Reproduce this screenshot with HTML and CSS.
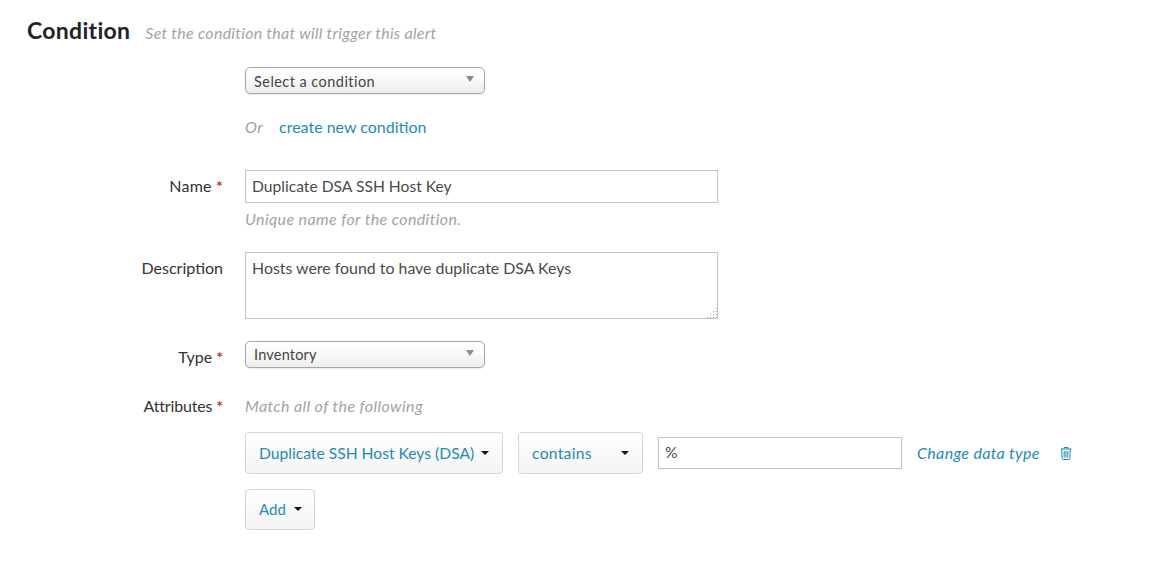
FILE: index.html
```html
<!DOCTYPE html>
<html lang="en">
<head>
<meta charset="utf-8">
<title>Condition</title>
<link rel="stylesheet" href="styles.css">
</head>
<body>
<header class="head">
  <h1 class="title">Condition</h1>
  <span class="subtitle">Set the condition that will trigger this alert</span>
</header>
<form class="form">
  <div class="row row-select">
    <div class="label"></div>
    <div class="field">
      <div class="select select-cond"><span>Select a condition</span><i class="select-arrow"></i></div>
    </div>
  </div>
  <div class="row row-or">
    <div class="label"></div>
    <div class="field or-line"><em class="or">Or</em><a class="link">create new condition</a></div>
  </div>
  <div class="row row-name">
    <div class="label label-input label-name">Name <b class="req">*</b></div>
    <div class="field">
      <input class="input input-wide" type="text" value="Duplicate DSA SSH Host Key">
      <div class="hint">Unique name for the condition.</div>
    </div>
  </div>
  <div class="row row-desc">
    <div class="label label-input">Description</div>
    <div class="field area-wrap">
      <textarea class="input input-wide area">Hosts were found to have duplicate DSA Keys</textarea>
      <svg class="grip" width="11" height="11" viewBox="0 0 11 11" fill="#a8a8a8">
        <rect x="9" y="0" width="1" height="1"/>
        <rect x="9" y="3" width="1" height="1"/><rect x="6" y="3" width="1" height="1"/>
        <rect x="9" y="6" width="1" height="1"/><rect x="6" y="6" width="1" height="1"/><rect x="3" y="6" width="1" height="1"/>
        <rect x="9" y="9" width="1" height="1"/><rect x="6" y="9" width="1" height="1"/><rect x="3" y="9" width="1" height="1"/><rect x="0" y="9" width="1" height="1"/>
      </svg>
    </div>
  </div>
  <div class="row row-type">
    <div class="label label-type">Type <b class="req">*</b></div>
    <div class="field">
      <div class="select"><span>Inventory</span><i class="select-arrow"></i></div>
    </div>
  </div>
  <div class="row row-attr">
    <div class="label label-attr">Attributes <b class="req">*</b></div>
    <div class="field">
      <div class="hint hint-attr">Match all of the following</div>
      <div class="rule">
        <button class="btn btn-attr" type="button">Duplicate SSH Host Keys (DSA)<i class="caret"></i></button>
        <button class="btn btn-op" type="button">contains<i class="caret"></i></button>
        <input class="input input-val" type="text" value="%">
        <a class="change">Change data type</a>
        <svg class="trash" width="12" height="14" viewBox="0 0 12 14" fill="none" stroke="#1a8cb8" stroke-width="1">
          <path d="M0.5 3H11.5M4 3V1.5H8V3M1.7 3L2.2 12.5Q2.3 13.5 3.2 13.5H8.8Q9.7 13.5 9.8 12.5L10.3 3"/>
          <path d="M4.2 5V11.5M6 5V11.5M7.8 5V11.5"/>
        </svg>
      </div>
      <button class="btn btn-add" type="button">Add<i class="caret"></i></button>
    </div>
  </div>
</form>
</body>
</html>
```
FILE: styles.css
```css
* { box-sizing: border-box; }
html, body { margin: 0; padding: 0; }
body {
  background: #fff;
  font-family: "Lato", "Open Sans", sans-serif;
  font-size: 16px;
  color: #444;
  height: 566px;
  overflow: hidden;
}
.head {
  display: flex;
  align-items: flex-start;
  padding: 17px 0 0 27px;
  height: 67px;
}
.title {
  margin: 0;
  font-size: 23px;
  font-weight: 700;
  letter-spacing: .3px;
  line-height: 27px;
  color: #222;
}
.subtitle {
  margin: 2px 0 0 15px;
  font-size: 16px;
  line-height: 27px;
  letter-spacing: .26px;
  font-style: italic;
  color: #a3a3a3;
}
.form { display: block; }
.row { display: flex; }
.label {
  width: 223px;
  flex: none;
  text-align: right;
  color: #333;
  font-size: 16px;
  line-height: 20px;
}
.label-name { letter-spacing: .2px; }
.field { margin-left: 22px; flex: none; }
.req { color: #c8321e; font-weight: 700; }
.select {
  display: flex;
  align-items: center;
  justify-content: space-between;
  width: 240px;
  height: 27px;
  padding: 0 10px 0 8px;
  border: 1px solid #a5a5a5;
  border-radius: 5px;
  background: linear-gradient(#fff 0%, #fafafa 45%, #ececec 100%);
  box-shadow: 0 1px 1px rgba(0,0,0,.08);
  font-size: 14.5px;
  letter-spacing: .2px;
  color: #444;
}
.select-cond { letter-spacing: .45px; padding-top: 1px; }
.select-arrow {
  width: 0; height: 0;
  margin-bottom: 4px;
  border-left: 4px solid transparent;
  border-right: 4px solid transparent;
  border-top: 6px solid #8c8c8c;
}
.row-or { margin-top: 21px; }
.or-line { display: flex; align-items: center; height: 22px; }
.or { color: #a0a0a0; width: 34px; letter-spacing: .4px; }
.link, .change { color: #1a8cb8; }
.row-name { margin-top: 33px; }
.label-input { padding-top: 6px; }
.input {
  display: block;
  border: 1px solid #c4c4c4;
  background: #fff;
  font-family: inherit;
  font-size: 15.65px;
  color: #4a4a4a;
  padding: 0 6px 2px;
  margin: 0;
  outline: none;
  border-radius: 0;
}
.input-wide { width: 473px; height: 33px; }
.hint { font-style: italic; color: #a3a3a3; font-size: 16px; letter-spacing: .38px; line-height: 20px; margin-top: 6px; }
.row-desc { margin-top: 23px; }
.area-wrap { position: relative; }
.area { height: 67px; padding-top: 5px; font-size: 15.9px; line-height: 20px; resize: none; }
.grip { position: absolute; right: 0; bottom: 0; }
.row-type { margin-top: 22px; }
.label-type { padding-top: 6px; }
.row-attr { margin-top: 28px; }
.label-attr { padding-top: 0; letter-spacing: -.15px; }
.hint-attr { margin-top: 0; }
.rule { display: flex; align-items: center; margin-top: 16px; }
.btn {
  display: flex;
  align-items: center;
  justify-content: space-between;
  font-family: inherit;
  font-size: 15.65px;
  color: #1a8cb8;
  height: 42px;
  padding: 0 13px;
  border: 1px solid #d5d5d5;
  border-radius: 4px;
  background: linear-gradient(#fff, #f4f4f4);
}
.btn-attr { width: 258px; }
.btn-op { width: 125px; margin-left: 15px; letter-spacing: .3px; }
.btn-add { width: 70px; height: 41px; margin-top: 15px; justify-content: flex-start; gap: 8px; padding-bottom: 2px; font-size: 15px; }
.caret {
  width: 0; height: 0;
  border-left: 4px solid transparent;
  border-right: 4px solid transparent;
  border-top: 4px solid #111;
}
.input-val { width: 244px; height: 32px; margin-left: 15px; }
.change { font-style: italic; margin-left: 15px; padding-bottom: 2px; font-size: 16px; letter-spacing: .33px; }
.trash { margin-left: 20px; }
```
